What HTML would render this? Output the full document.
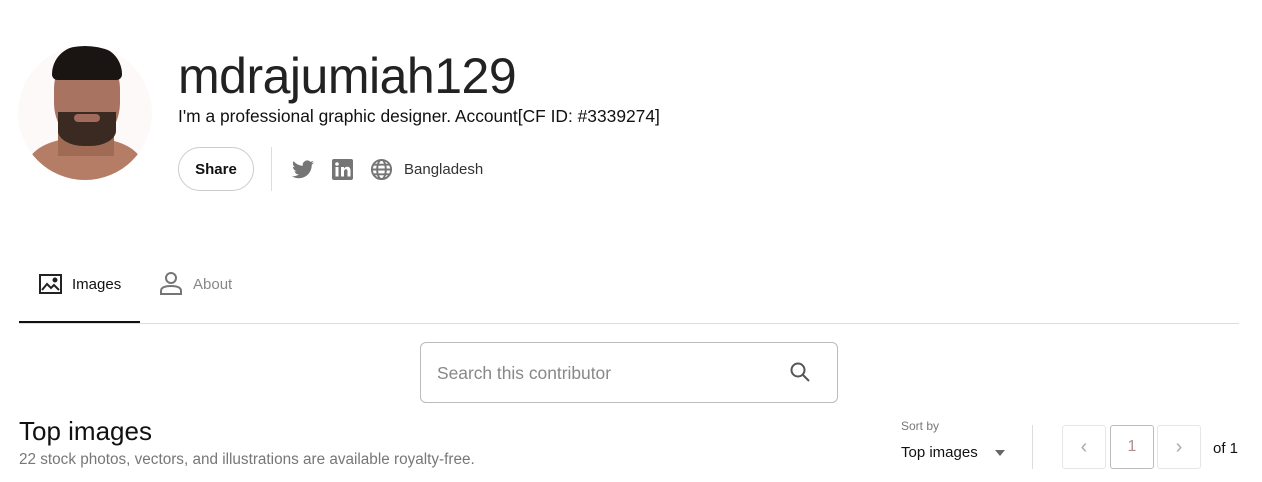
<!DOCTYPE html><html><head><style>
body{margin:0;width:1262px;height:482px;background:#fff;font-family:"Liberation Sans",sans-serif;position:relative;overflow:hidden;color:#222}
.a{position:absolute}
</style></head><body>
<div class="a" style="left:18px;top:46px;width:134px;height:134px;border-radius:50%;background:#fdf9f9;overflow:hidden">
<div class="a" style="left:10px;top:92px;width:114px;height:60px;background:#b57c66;border-radius:45% 45% 0 0"></div>
<div class="a" style="left:40px;top:60px;width:56px;height:50px;background:#a06b55"></div>
<div class="a" style="left:36px;top:8px;width:66px;height:88px;background:#a87361;border-radius:40% 40% 45% 45%"></div>
<div class="a" style="left:34px;top:0;width:70px;height:34px;background:#1a1512;border-radius:30px 30px 6px 6px"></div>
<div class="a" style="left:40px;top:66px;width:58px;height:34px;background:#3a2a22;border-radius:0 0 45% 45%"></div>
<div class="a" style="left:56px;top:68px;width:26px;height:8px;background:#a06b5a;border-radius:4px"></div>
</div>
<div class="a" style="left:178px;top:47px;font-size:50px;color:#222;letter-spacing:-0.5px">mdrajumiah129</div>
<div class="a" style="left:178px;top:106px;font-size:17.4px;color:#111">I'm a professional graphic designer. Account[CF ID: #3339274]</div>
<div class="a" style="left:178px;top:147px;width:74px;height:42px;border:1px solid #ccc;border-radius:22px;font-size:15px;font-weight:bold;display:flex;align-items:center;justify-content:center;color:#111">Share</div>
<div class="a" style="left:271px;top:147px;width:1px;height:44px;background:#ddd"></div>
<svg class="a" style="left:292px;top:160px" width="22" height="19" viewBox="0 0 24 20"><path fill="#757575" d="M24 2.4a10 10 0 0 1-2.8.8A5 5 0 0 0 23.3.5a10 10 0 0 1-3.1 1.2A4.9 4.9 0 0 0 11.8 6 14 14 0 0 1 1.7.9a4.9 4.9 0 0 0 1.5 6.6A4.9 4.9 0 0 1 1 6.9a4.9 4.9 0 0 0 3.9 4.9 5 5 0 0 1-2.2.1 4.9 4.9 0 0 0 4.6 3.4A9.9 9.9 0 0 1 0 17.3 14 14 0 0 0 7.5 19.5c9 0 14-7.5 14-14v-.6A10 10 0 0 0 24 2.4z"/></svg>
<svg class="a" style="left:332px;top:159px" width="21" height="21" viewBox="0 0 21 21"><rect width="21" height="21" rx="2" fill="#757575"/><rect x="3.5" y="8" width="3" height="9.5" fill="#fff"/><circle cx="5" cy="5" r="1.8" fill="#fff"/><path d="M9 8h3v1.5c.6-1 1.7-1.8 3.3-1.8 2.3 0 3.2 1.5 3.2 4v5.8h-3v-5.2c0-1.3-.4-2-1.5-2s-2 .8-2 2.2v5H9z" fill="#fff"/></svg>
<svg class="a" style="left:370px;top:158px" width="23" height="23" viewBox="0 0 24 24" fill="none" stroke="#757575" stroke-width="2"><circle cx="12" cy="12" r="10"/><ellipse cx="12" cy="12" rx="4.5" ry="10"/><path d="M2 12h20M3.5 7h17M3.5 17h17"/></svg>
<div class="a" style="left:404px;top:161px;font-size:15px;color:#333">Bangladesh</div>
<svg class="a" style="left:39px;top:274px" width="23" height="20" viewBox="0 0 23 20" fill="none" stroke="#222" stroke-width="2"><rect x="1" y="1" width="21" height="18"/><path d="M3 16l5-6 4 4 3-3 5 5"/><circle cx="16" cy="6" r="1.5" fill="#222"/></svg>
<div class="a" style="left:72px;top:276px;font-size:15px;color:#111">Images</div>
<svg class="a" style="left:159px;top:271px" width="24" height="25" viewBox="0 0 24 25" fill="none" stroke="#757575" stroke-width="2"><circle cx="12" cy="7" r="5"/><path d="M2 23v-3c0-3 3-5 10-5s10 2 10 5v3z"/></svg>
<div class="a" style="left:193px;top:276px;font-size:15px;color:#888">About</div>
<div class="a" style="left:19px;top:323px;width:1220px;height:1px;background:#ddd"></div>
<div class="a" style="left:19px;top:321px;width:121px;height:2px;background:#111"></div>
<div class="a" style="left:420px;top:342px;width:416px;height:59px;border:1px solid #bbb;border-radius:6px"></div>
<div class="a" style="left:437px;top:363px;font-size:17.4px;color:#888">Search this contributor</div>
<svg class="a" style="left:790px;top:362px" width="20" height="20" viewBox="0 0 20 20" fill="none" stroke="#555" stroke-width="2"><circle cx="8" cy="8" r="6.5"/><path d="M13 13l6 6"/></svg>
<div class="a" style="left:19px;top:416px;font-size:26px;color:#111">Top images</div>
<div class="a" style="left:19px;top:451px;font-size:15.3px;color:#777">22 stock photos, vectors, and illustrations are available royalty-free.</div>
<div class="a" style="left:901px;top:419px;font-size:12px;color:#777">Sort by</div>
<div class="a" style="left:901px;top:444px;font-size:15px;color:#111">Top images</div>
<div class="a" style="left:995px;top:450px;width:0;height:0;border-left:5px solid transparent;border-right:5px solid transparent;border-top:6px solid #666"></div>
<div class="a" style="left:1032px;top:425px;width:1px;height:44px;background:#ddd"></div>
<div class="a" style="left:1062px;top:425px;width:42px;height:42px;border:1px solid #e6e6e6;border-radius:3px;color:#aaa;font-size:20px;display:flex;align-items:center;justify-content:center">&#8249;</div>
<div class="a" style="left:1110px;top:425px;width:42px;height:42px;border:1px solid #bbb;border-radius:3px;color:#b09090;font-size:16px;display:flex;align-items:center;justify-content:center">1</div>
<div class="a" style="left:1157px;top:425px;width:42px;height:42px;border:1px solid #e6e6e6;border-radius:3px;color:#aaa;font-size:20px;display:flex;align-items:center;justify-content:center">&#8250;</div>
<div class="a" style="left:1213px;top:440px;font-size:15px;color:#111">of 1</div>
</body></html>
